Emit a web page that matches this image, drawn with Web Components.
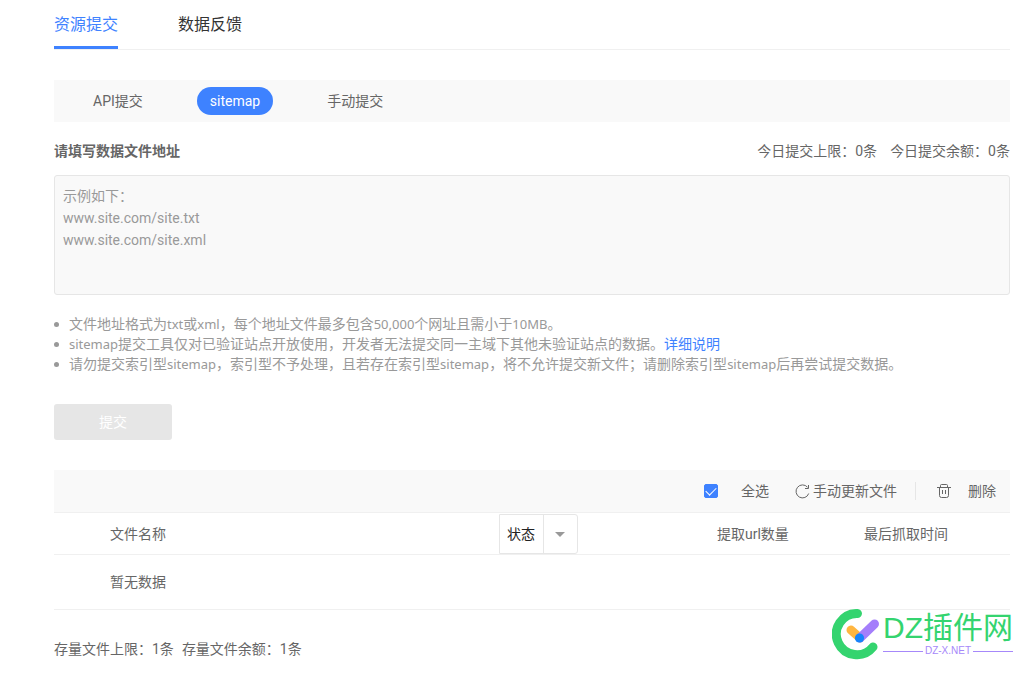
<!DOCTYPE html>
<html lang="zh-CN">
<head>
<meta charset="utf-8">
<title>资源提交</title>
<style>
  body {
    margin: 0;
    background: #fff;
    color: #666;
    font: 14px/20px Roboto, "Noto Sans CJK SC", sans-serif;
  }
</style>
</head>
<body>
<submit-page>
  <page-tabs></page-tabs>
  <method-nav></method-nav>
  <sitemap-form></sitemap-form>
  <file-list></file-list>
  <brand-mark slot="mark"></brand-mark>
</submit-page>

<script>
const shared = `
  * { box-sizing: border-box; }
  a { color: inherit; text-decoration: none; }
  button, select, textarea { font: inherit; color: inherit; margin: 0; }
`;

function define(name, css, html) {
  const template = document.createElement('template');
  template.innerHTML = `<style>${shared}${css}</style>${html}`;
  customElements.define(name, class extends HTMLElement {
    constructor() {
      super();
      this.attachShadow({ mode: 'open' }).append(template.content.cloneNode(true));
    }
  });
}

define('submit-page', `
  :host { display: block; position: relative; padding: 0 22px 14px 54px; }
  main { display: flex; flex-direction: column; gap: 30px; }
`, `<main><slot></slot></main><slot name="mark"></slot>`);

define('page-tabs', `
  :host { display: block; }
  nav { display: flex; gap: 60px; height: 50px; border-bottom: 1px solid #f0f0f0; }
  a { font-size: 16px; line-height: 50px; color: #333; height: 49px; }
  a[aria-current] { color: #3e82ff; border-bottom: 3px solid #3e82ff; }
`, `
  <nav>
    <a href="#submit" aria-current="page">资源提交</a>
    <a href="#feedback">数据反馈</a>
  </nav>`);

define('method-nav', `
  :host { display: block; }
  nav { display: flex; align-items: center; gap: 41px; height: 42px; padding: 0 26px; background: #f9f9f9; }
  a { padding: 0 13px; line-height: 28px; border-radius: 14px; white-space: nowrap; }
  a[aria-current] { background: #3e82ff; color: #fff; }
`, `
  <nav>
    <a href="#api">API提交</a>
    <a href="#sitemap" aria-current="page">sitemap</a>
    <a href="#manual">手动提交</a>
  </nav>`);

define('sitemap-form', `
  :host { display: block; margin-top: -11px; }
  .head { display: flex; justify-content: space-between; margin-bottom: 14px; }
  label { font-weight: 700; }
  .quota { display: flex; gap: 13px; }
  textarea {
    display: block; width: 100%; height: 120px; padding: 9px 8px; resize: none;
    border: 1px solid #e6e6e6; border-radius: 3px; background: #f9f9f9;
    line-height: 22px; outline: none;
  }
  textarea::placeholder { color: #999; opacity: 1; }
  ul { list-style: none; margin: 19px 0 30px; padding: 0; color: #999; }
  li { display: grid; grid-template-columns: 5px 1fr; gap: 10px; align-items: center; }
  li::before { content: ""; height: 5px; border-radius: 50%; background: #999; }
  li a { color: #3e82ff; }
  .en { font-family: "Noto Sans", sans-serif; font-size: 13px; line-height: 1; }
  button { display: block; width: 118px; height: 36px; padding: 0; border: 0; border-radius: 3px; background: #e6e6e6; color: #fff; }
`, `
  <form>
    <div class="head">
      <label for="address">请填写数据文件地址</label>
      <div class="quota">
        <span>今日提交上限：0条</span>
        <span>今日提交余额：0条</span>
      </div>
    </div>
    <textarea id="address" placeholder="示例如下：&#10;www.site.com/site.txt&#10;www.site.com/site.xml"></textarea>
    <ul>
      <li><span>文件地址格式为<span class="en">txt</span>或<span class="en">xml</span>，每个地址文件最多包含<span class="en">50,000</span>个网址且需小于<span class="en">10MB</span>。</span></li>
      <li><span><span class="en">sitemap</span>提交工具仅对已验证站点开放使用，开发者无法提交同一主域下其他未验证站点的数据。<a href="#detail">详细说明</a></span></li>
      <li><span>请勿提交索引型<span class="en">sitemap</span>，索引型不予处理，且若存在索引型<span class="en">sitemap</span>，将不允许提交新文件；请删除索引型<span class="en">sitemap</span>后再尝试提交数据。</span></li>
    </ul>
    <button type="submit" disabled>提交</button>
  </form>`);

define('file-list', `
  :host { display: block; }
  .bar { display: flex; align-items: center; justify-content: flex-end; height: 43px; padding-right: 14px; background: #f9f9f9; border-bottom: 1px solid #f0f0f0; }
  .all { display: flex; align-items: center; gap: 23px; margin-right: 26px; }
  input { appearance: none; display: grid; place-items: center; width: 14px; height: 14px; margin: 0; border-radius: 2px; background: #fff; border: 1px solid #ccc; }
  input:checked { background: #3e82ff; border-color: #3e82ff; }
  input:checked::after { content: ""; width: 9px; height: 5px; margin-bottom: 3px; border: solid #fff; border-width: 0 0 1px 1px; transform: rotate(-45deg); }
  button { display: flex; align-items: center; padding: 0; border: 0; background: none; }
  .update { gap: 3px; padding-right: 18px; }
  .delete { gap: 17px; padding-left: 21px; }
  .rule { width: 1px; height: 18px; background: #e6e6e6; }
  svg { display: block; fill: none; stroke: #666; }
  table { width: 100%; table-layout: fixed; border-collapse: separate; border-spacing: 0; }
  th, td { padding: 0 0 0 56px; text-align: left; font-weight: 400; border-bottom: 1px solid #f0f0f0; white-space: nowrap; }
  th { height: 42px; }
  td { height: 55px; }
  .status { width: 218px; }
  .count { width: 147px; }
  .time { width: 202px; }
  .pick { position: relative; width: 79px; height: 40px; }
  select {
    appearance: none; display: block; width: 100%; height: 100%; padding: 0 7px; color: #222;
    border: 1px solid #e6e6e6; border-radius: 0 3px 3px 0; outline: none;
    background: linear-gradient(#e6e6e6, #e6e6e6) 43px 0 / 1px 100% no-repeat #fff;
  }
  .pick svg { position: absolute; right: 13px; top: 18px; fill: #999; stroke: none; pointer-events: none; }
  footer { display: flex; gap: 8px; margin-top: 29px; }
`, `
  <div class="bar">
    <div class="all"><input type="checkbox" id="all" checked><label for="all">全选</label></div>
    <button type="button" class="update">
      <svg width="15" height="15" viewBox="0 0 15 15" aria-hidden="true"><path d="M13.700 9.500A6.500 6.500 0 1 1 12.500 3.200M13.500 1V4.500H10"/></svg>手动更新文件
    </button>
    <span class="rule"></span>
    <button type="button" class="delete">
      <svg width="14" height="14" viewBox="0 0 14 14" aria-hidden="true"><path d="M0 3.500h14M3.500 3V1.500q0-1 1-1h5q1 0 1 1V3M2.500 3.500v8q0 2 2 2h5q2 0 2-2v-8M5.500 6v4M8.500 6v4"/></svg>删除
    </button>
  </div>
  <table>
    <thead>
      <tr>
        <th>文件名称</th>
        <th class="status">
          <div class="pick">
            <select aria-label="状态"><option>状态</option></select>
            <svg width="10" height="5" viewBox="0 0 10 5" aria-hidden="true"><path d="M0 0h10L5 5z"/></svg>
          </div>
        </th>
        <th class="count">提取url数量</th>
        <th class="time">最后抓取时间</th>
      </tr>
    </thead>
    <tbody><tr><td colspan="4">暂无数据</td></tr></tbody>
  </table>
  <footer>
    <span>存量文件上限：1条</span>
    <span>存量文件余额：1条</span>
  </footer>`);

define('brand-mark', `
  :host {
    position: absolute; right: 19px; bottom: 12px; display: flex; gap: 2px; color: #34d46f;
    font-family: "Liberation Sans", "Noto Sans CJK SC", sans-serif; white-space: nowrap;
  }
  svg { display: block; fill: none; stroke-linecap: round; }
  .name { font-size: 30px; line-height: 34px; margin-top: 2px; }
  .site { display: flex; align-items: center; gap: 2px; font-size: 10px; line-height: 12px; color: #a688fa; }
  .site::before, .site::after { content: ""; flex: 1; height: 1px; background: #a688fa; }
`, `
  <svg width="49" height="52" viewBox="0 0 49 52" aria-hidden="true">
    <path d="M25.500 4.500A20.600 20.600 0 1 0 41 38" stroke="#34d46f" stroke-width="9"/>
    <path d="M19 21l9 8" stroke="#ffb640" stroke-width="9"/>
    <path d="M28 29L42.500 15" stroke="#a47efb" stroke-width="9"/>
    <circle cx="27.500" cy="29" r="4.600" fill="#1684fb"/>
  </svg>
  <div class="text">
    <div class="name">DZ插件网</div>
    <div class="site">DZ-X.NET</div>
  </div>`);
</script>
</body>
</html>
